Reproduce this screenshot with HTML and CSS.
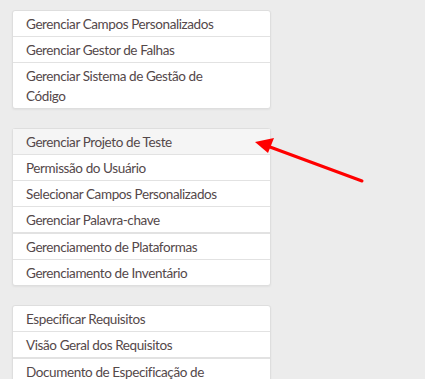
FILE: index.html
```html
<!DOCTYPE html>
<html lang="pt">
<head>
<meta charset="UTF-8">
<title>Menu</title>
<link rel="stylesheet" href="styles.css">
</head>
<body>
<div class="page">
  <ul class="menu-card">
    <li>Gerenciar Campos Personalizados</li>
    <li>Gerenciar Gestor de Falhas</li>
    <li>Gerenciar Sistema de Gestão de<br>Código</li>
  </ul>
  <ul class="menu-card">
    <li class="active">Gerenciar Projeto de Teste</li>
    <li>Permissão do Usuário</li>
    <li>Selecionar Campos Personalizados</li>
    <li>Gerenciar Palavra-chave</li>
    <li class="group">Gerenciamento de Plataformas</li>
    <li>Gerenciamento de Inventário</li>
  </ul>
  <ul class="menu-card">
    <li>Especificar Requisitos</li>
    <li>Visão Geral dos Requisitos</li>
    <li class="group">Documento de Especificação de<br>Requisitos</li>
  </ul>
</div>
<svg class="arrow" width="425" height="379" viewBox="0 0 425 379">
  <line x1="362" y1="181" x2="270" y2="147" stroke="#f00" stroke-width="3" stroke-linecap="round"/>
  <polygon points="255,142 274,138 268,153" fill="#f00"/>
</svg>
</body>
</html>
```
FILE: styles.css
```css
body {
  margin: 0;
  padding: 0;
  background: #ececec;
  font-family: Lato, "Open Sans", sans-serif;
  font-size: 13.5px;
  letter-spacing: -0.4px;
  color: #54484a;
}
.page {
  padding: 10px 0 0 12px;
  width: 259px;
}
.menu-card {
  list-style: none;
  margin: 0 0 19px 0;
  padding: 0;
  background: #fff;
  border: 1px solid #dedede;
  border-radius: 3px;
  box-shadow: 0 1px 2px rgba(0, 0, 0, 0.05);
}
.menu-card li {
  padding: 3px 14px 2px 13px;
  line-height: 20px;
  border-top: 1px solid #e2e2e2;
}
.menu-card li:first-child {
  border-top: none;
}
.menu-card li.group {
  border-top: 2px solid #e2e2e2;
}
.menu-card li.active {
  background: #f5f5f5;
}
.arrow {
  position: absolute;
  left: 0;
  top: 0;
  pointer-events: none;
}
```
